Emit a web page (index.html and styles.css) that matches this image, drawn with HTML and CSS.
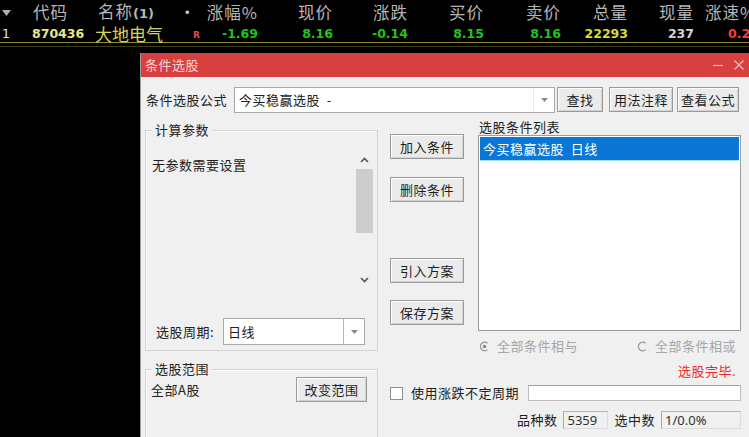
FILE: index.html
```html
<!DOCTYPE html>
<html lang="zh">
<head>
<meta charset="utf-8">
<title>条件选股</title>
<link rel="stylesheet" href="styles.css">
</head>
<body>
<div class="quotes">
  <div class="qrow head">
    <span class="c c-idx"><svg class="tri" width="9" height="6" viewBox="0 0 9 6"><path d="M0 0H9L4.5 6Z" fill="#b0b0b0"/></svg></span>
    <span class="c c-code">代码</span>
    <span class="c c-name">名称<b class="paren">(1)</b></span>
    <span class="c c-flag dot">•</span>
    <span class="c c-num w-pct">涨幅%</span>
    <span class="c c-num w-75">现价</span>
    <span class="c c-num w-75">涨跌</span>
    <span class="c c-num w-76">买价</span>
    <span class="c c-num w-77">卖价</span>
    <span class="c c-num w-67">总量</span>
    <span class="c c-num w-66">现量</span>
    <span class="c c-left w-last">涨速%</span>
  </div>
  <div class="qrow data">
    <span class="c c-idx n-idx">1</span>
    <span class="c c-code n-code">870436</span>
    <span class="c c-name n-name">大地电气</span>
    <span class="c c-flag n-flag">R</span>
    <span class="c c-num w-pct n green">-1.69</span>
    <span class="c c-num w-75 n green">8.16</span>
    <span class="c c-num w-75 n green">-0.14</span>
    <span class="c c-num w-76 n green">8.15</span>
    <span class="c c-num w-77 n green">8.16</span>
    <span class="c c-num w-67 n yellow">22293</span>
    <span class="c c-num w-66 n white">237</span>
    <span class="c c-num w-last n red">0.25</span>
  </div>
  <div class="qsep"></div>
</div>

<div class="dlg">
  <div class="titlebar">
    <span class="ttl">条件选股</span>
    <span class="wctl">
      <svg width="12" height="12" viewBox="0 0 12 12"><path d="M1 6.5H11" stroke="#f2bcbc" stroke-width="1.2"/></svg>
      <svg width="12" height="12" viewBox="0 0 12 12"><path d="M1.5 1.5L10.5 10.5M10.5 1.5L1.5 10.5" stroke="#f2bcbc" stroke-width="1.2"/></svg>
    </span>
  </div>
  <div class="dbody">
    <div class="formula-row">
      <span class="lbl f-lbl">条件选股公式</span>
      <div class="combo f-combo">
        <span class="combo-val">今买稳赢选股&nbsp;&nbsp;-</span>
        <span class="combo-drop faint"><svg width="7" height="4" viewBox="0 0 7 4"><path d="M0 0H7L3.5 4Z" fill="#8a8a8a"/></svg></span>
      </div>
      <button class="btn b-find">查找</button>
      <button class="btn b-usage">用法注释</button>
      <button class="btn b-view">查看公式</button>
    </div>

    <div class="main">
      <div class="leftcol">
        <div class="gbox box1">
          <div class="gtitle">计算参数</div>
          <div class="params">
            <div class="ptext">无参数需要设置</div>
            <div class="vscroll">
              <span class="sb-btn"><svg width="9" height="6" viewBox="0 0 9 6"><path d="M1 5L4.5 1.5L8 5" stroke="#555" stroke-width="1.6" fill="none"/></svg></span>
              <span class="sb-thumb"></span>
              <span class="sb-track"></span>
              <span class="sb-btn"><svg width="9" height="6" viewBox="0 0 9 6"><path d="M1 1L4.5 4.5L8 1" stroke="#555" stroke-width="1.6" fill="none"/></svg></span>
            </div>
          </div>
          <div class="period-row">
            <span class="lbl p-lbl">选股周期:</span>
            <div class="combo p-combo">
              <span class="combo-val">日线</span>
              <span class="combo-drop"><svg width="7" height="4" viewBox="0 0 7 4"><path d="M0 0H7L3.5 4Z" fill="#8a8a8a"/></svg></span>
            </div>
          </div>
        </div>
        <div class="gbox box2">
          <div class="gtitle">选股范围</div>
          <div class="range-row">
            <span class="lbl">全部A股</span>
            <button class="btn b-range">改变范围</button>
          </div>
        </div>
      </div>

      <div class="rightarea">
        <div class="rtop">
          <div class="midcol">
            <button class="btn b-mid b-add">加入条件</button>
            <button class="btn b-mid b-del">删除条件</button>
            <button class="btn b-mid b-load">引入方案</button>
            <button class="btn b-mid b-save">保存方案</button>
          </div>
          <div class="listcol">
            <div class="list-lbl">选股条件列表</div>
            <div class="list">
              <div class="item sel">今买稳赢选股&nbsp;&nbsp;日线</div>
            </div>
          </div>
        </div>
        <div class="radios">
          <span class="radio-grp">
            <svg width="11" height="11" viewBox="0 0 11 11"><path d="M8.5 2.2A4.3 4.3 0 1 0 8.5 8.8" stroke="#9a9a9a" stroke-width="1.3" fill="none"/><circle cx="5.5" cy="5.5" r="1.8" fill="#8a8a8a"/></svg>
            <span class="radio-lbl">全部条件相与</span>
          </span>
          <span class="radio-grp">
            <svg width="11" height="11" viewBox="0 0 11 11"><path d="M8.5 2.2A4.3 4.3 0 1 0 8.5 8.8" stroke="#9a9a9a" stroke-width="1.3" fill="none"/></svg>
            <span class="radio-lbl">全部条件相或</span>
          </span>
        </div>
        <div class="status">选股完毕.</div>
        <div class="chk-row">
          <span class="chk"></span>
          <span class="lbl chk-lbl">使用涨跌不定周期</span>
          <span class="inp"></span>
        </div>
        <div class="count-row">
          <span class="lbl">品种数</span>
          <span class="cbox cbox-a">5359</span>
          <span class="lbl c-lbl2">选中数</span>
          <span class="cbox cbox-b">1/0.0%</span>
        </div>
      </div>
    </div>
  </div>
</div>
</body>
</html>
```

FILE: styles.css
```css
* { box-sizing: border-box; }

html, body {
  margin: 0;
  padding: 0;
}

body {
  width: 749px;
  height: 437px;
  overflow: hidden;
  position: relative;
  background: #000;
  font-family: "Noto Sans CJK SC", "Noto Sans", sans-serif;
}

/* ---------- quote table ---------- */
.quotes {
  width: 749px;
}

.qrow {
  display: flex;
  align-items: center;
  white-space: nowrap;
}

.head {
  height: 24px;
  color: #b6b6b6;
  font-size: 16.5px;
  letter-spacing: 1px;
}

.head .c { line-height: 24px; }

.data {
  height: 19px;
  line-height: 19px;
  border-bottom: 1px solid #8e8e3c;
}

.qsep {
  margin-top: 3px;
  height: 1px;
  background: #3e3e16;
}

.c { flex: none; display: block; }

.c-idx { width: 27px; padding-left: 2px; }
.c-code { width: 68px; padding-left: 6px; }
.c-name { width: 80px; padding-left: 3px; }
.c-flag { width: 25px; padding-left: 3px; }
.c-num { text-align: right; }
.c-left { text-align: left; padding-left: 11px; }

.w-pct { width: 58px; }
.w-75 { width: 75px; }
.w-76 { width: 76px; }
.w-77 { width: 77px; }
.w-67 { width: 67px; }
.w-66 { width: 66px; }
.w-last { width: 66px; }

.tri { display: block; margin-top: 1px; }
.paren { font-family: "DejaVu Sans", sans-serif; font-size: 13px; font-weight: bold; letter-spacing: 0; }
.dot { padding-left: 4px; color: #c8c8c8; }

.n,
.n-code,
.n-idx {
  font-family: "DejaVu Sans", sans-serif;
  font-weight: bold;
  font-size: 12.5px;
}

.n-idx { color: #e8e8e8; font-weight: normal; }
.n-code { color: #e6e68c; padding-left: 5px; }
.n-name { color: #d4d45a; font-size: 17px; padding-left: 0; }
.n-flag {
  font-family: "DejaVu Sans", sans-serif;
  font-weight: bold;
  font-size: 9px;
  color: #e84848;
  padding-left: 18px;
  padding-top: 5px;
}
.green { color: #1cc41c; }
.yellow { color: #dada3c; }
.white { color: #d4d4d4; }
.red { color: #ff3a3a; text-align: left; padding-left: 34px; }

/* ---------- dialog ---------- */
.dlg {
  position: absolute;
  left: 140px;
  top: 53px;
  width: 609px;
  height: 384px;
  overflow: hidden;
  background: #f0f0f0;
  border-left: 1px solid #9a9a9a;
  color: #202020;
  font-size: 13px;
  letter-spacing: 0.5px;
  line-height: 16px;
}

.titlebar {
  height: 24px;
  background: #d6403f;
  display: flex;
  align-items: center;
  padding-left: 4px;
  padding-right: 4px;
}

.ttl {
  color: #f7d4d4;
  font-size: 13px;
}

.wctl {
  margin-left: auto;
  display: flex;
  gap: 9px;
  align-items: center;
}
.wctl svg { display: block; }

.dbody {
  padding: 10px 0 0 3px;
}

.lbl { white-space: nowrap; }

.formula-row {
  display: flex;
  align-items: flex-start;
  height: 26px;
  padding-left: 2px;
}

.f-lbl {
  width: 88px;
  line-height: 26px;
}

.combo {
  display: flex;
  align-items: stretch;
  background: #fff;
  border: 1px solid #a9a9a9;
}

.combo-val {
  flex: 1;
  padding-left: 4px;
  display: flex;
  align-items: center;
}

.combo-drop {
  width: 21px;
  border-left: 1px solid #b8b8b8;
  display: flex;
  align-items: center;
  justify-content: center;
}
.combo-drop.faint { border-left-color: #ececec; }
.combo-drop svg { display: block; }

.f-combo { width: 321px; height: 26px; }

.btn {
  font-family: inherit;
  font-size: 13px;
  letter-spacing: 0.5px;
  color: #1e1e1e;
  background: #ebebeb;
  border: 1px solid #9a9a9a;
  box-shadow: inset 1px 1px 0 #fdfdfd, inset -1px -1px 0 #d2d2d2;
  padding: 0;
  height: 25px;
  line-height: 22px;
  text-align: center;
  flex: none;
}

.b-find { width: 46px; margin-left: 2px; }
.b-usage { width: 64px; margin-left: 6px; }
.b-view { width: 62px; margin-left: 4px; }

.main {
  display: flex;
  align-items: flex-start;
}

.leftcol {
  width: 233px;
  margin-left: 1px;
  flex: none;
}

.gbox {
  border: 1px solid #d3d3d3;
  box-shadow: inset 1px 1px 0 #fbfbfb;
}

.gtitle {
  width: fit-content;
  margin: -9px 0 0 6px;
  padding: 0 3px;
  background: #f0f0f0;
  height: 16px;
}

.box1 {
  margin-top: 17px;
  height: 221px;
}

.params {
  display: flex;
  margin-top: 14px;
  height: 136px;
}

.ptext {
  flex: 1;
  padding: 5px 0 0 6px;
}

.vscroll {
  width: 17px;
  margin-right: 4px;
  display: flex;
  flex-direction: column;
}

.sb-btn {
  height: 16px;
  display: flex;
  align-items: center;
  justify-content: center;
}
.sb-btn svg { display: block; }

.sb-thumb {
  height: 64px;
  margin-top: 1px;
  background: #cdcdcd;
}

.sb-track { flex: 1; }

.period-row {
  display: flex;
  align-items: center;
  margin-top: 30px;
  height: 27px;
  padding-left: 10px;
}

.p-lbl { width: 67px; }

.p-combo { width: 142px; height: 27px; }

.box2 {
  margin-top: 18px;
  height: 90px;
}

.range-row {
  display: flex;
  align-items: center;
  height: 25px;
  padding: 0 10px 0 5px;
}

.b-range { width: 71px; margin-left: auto; }

.rightarea {
  width: 351px;
  margin-left: 12px;
  flex: none;
}

.rtop { display: flex; align-items: flex-start; }

.midcol {
  width: 74px;
  display: flex;
  flex-direction: column;
  flex: none;
}

.b-mid { width: 74px; }
.b-add { margin-top: 21px; }
.b-del { margin-top: 18px; }
.b-load { margin-top: 56px; }
.b-save { margin-top: 17px; }

.listcol {
  width: 263px;
  margin-left: 14px;
  flex: none;
}

.list-lbl {
  margin-top: 6px;
  height: 16px;
  padding-left: 1px;
}

.list {
  height: 196px;
  background: #fff;
  border: 1px solid #9c9c9c;
  padding: 1px;
}

.item {
  height: 24px;
  line-height: 24px;
  padding-left: 3px;
  white-space: nowrap;
}

.item.sel {
  background: #0a76d6;
  color: #fff;
  border-bottom: 1px solid #9ee6f2;
}

.radios {
  display: flex;
  justify-content: space-between;
  align-items: center;
  margin-top: 7px;
  height: 16px;
  padding: 0 5px 0 89px;
}

.radio-grp {
  display: flex;
  align-items: center;
}
.radio-grp svg { display: block; }

.radio-lbl {
  color: #a6a6a6;
  margin-left: 7px;
}

.status {
  margin-top: 9px;
  height: 16px;
  text-align: right;
  padding-right: 5px;
  color: #ee2c2c;
}

.chk-row {
  display: flex;
  align-items: center;
  margin-top: 6px;
  height: 16px;
}

.chk {
  width: 13px;
  height: 13px;
  background: #fff;
  border: 1px solid #8e8e8e;
  flex: none;
}

.chk-lbl { margin-left: 8px; }

.inp {
  margin-left: auto;
  width: 213px;
  height: 16px;
  background: #fff;
  border: 1px solid #bdbdbd;
  border-top-color: #a0a0a0;
}

.count-row {
  display: flex;
  justify-content: flex-end;
  align-items: center;
  margin-top: 10px;
  height: 18px;
}

.cbox {
  height: 18px;
  line-height: 16px;
  padding-left: 3px;
  border: 1px solid #dcdcdc;
  border-left-color: #a8a8a8;
  border-top-color: #b4b4b4;
  color: #303030;
  font-family: "Noto Sans", sans-serif;
  letter-spacing: 0;
}

.cbox-a { width: 45px; margin-left: 6px; }
.c-lbl2 { margin-left: 6px; }
.cbox-b { width: 80px; margin-left: 6px; }
```
